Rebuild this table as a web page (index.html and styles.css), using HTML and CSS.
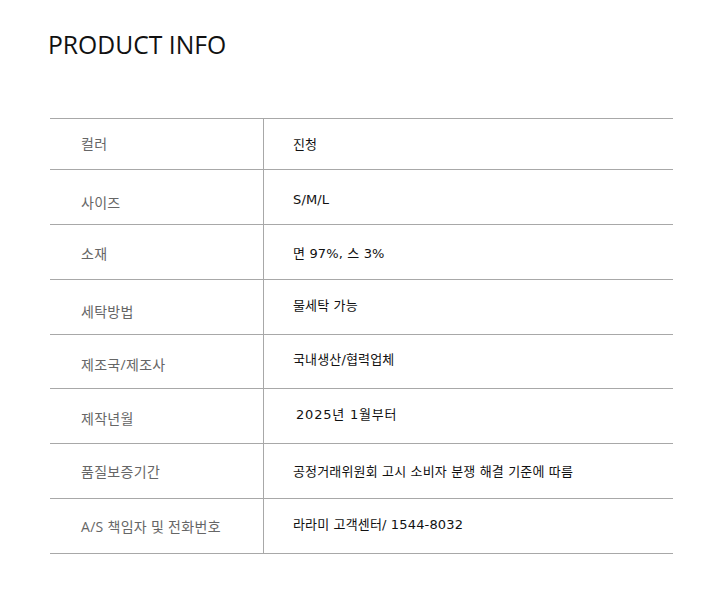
FILE: index.html
```html
<!DOCTYPE html>
<html lang="ko">
<head>
<meta charset="utf-8">
<link rel="stylesheet" href="styles.css">
</head>
<body>
<div class="page">
  <h1 class="title">PRODUCT INFO</h1>
  <div class="info">
    <div class="row r1"><div class="label">컬러</div><div class="value">진청</div></div>
    <div class="row r2"><div class="label">사이즈</div><div class="value">S/M/L</div></div>
    <div class="row r3"><div class="label">소재</div><div class="value">면 97%, 스 3%</div></div>
    <div class="row r4"><div class="label">세탁방법</div><div class="value">물세탁 가능</div></div>
    <div class="row r5"><div class="label">제조국/제조사</div><div class="value">국내생산/협력업체</div></div>
    <div class="row r6"><div class="label">제작년월</div><div class="value indent wide">2025년 1월부터</div></div>
    <div class="row r7"><div class="label">품질보증기간</div><div class="value">공정거래위원회 고시 소비자 분쟁 해결 기준에 따름</div></div>
    <div class="row r8"><div class="label">A/S 책임자 및 전화번호</div><div class="value">라라미 고객센터/ 1544-8032</div></div>
  </div>
</div>
</body>
</html>
```
FILE: styles.css
```css
html, body { margin: 0; padding: 0; background: #fff; }
body { font-family: "Open Sans", "Noto Sans CJK KR", sans-serif; }
.page { padding: 28px 0 0 48px; }
.title {
  margin: 0;
  font-weight: 400;
  font-size: 24.7px;
  line-height: 34px;
  color: #111;
}
.info {
  margin-top: 56px;
  margin-left: 2px;
  width: 623px;
  border-bottom: 1px solid #a8a8a8;
}
.row {
  display: grid;
  grid-template-columns: 214px 1fr;
  border-top: 1px solid #a8a8a8;
  height: 54px;
}
.row.r1 { height: 50px; }
.row.r5 { height: 53px; }
.label, .value {
  line-height: 20px;
  box-sizing: border-box;
}
.label {
  padding-left: 31px;
  font-size: 14px;
  letter-spacing: 0.3px;
  color: #666;
  border-right: 1px solid #a8a8a8;
}
.value {
  padding-left: 29px;
  font-family: "DejaVu Sans", "Noto Sans CJK KR", sans-serif;
  font-size: 13px;
  letter-spacing: 0.15px;
  color: #111;
}
.value.indent { padding-left: 32px; }
.value.wide { letter-spacing: 0.8px; }

.r1 .label { padding-top: 15px; }
.r2 .label { padding-top: 23px; }
.r3 .label { padding-top: 19px; }
.r4 .label { padding-top: 22px; }
.r5 .label { padding-top: 20px; }
.r6 .label { padding-top: 20px; }
.r7 .label { padding-top: 18px; }
.r8 .label { padding-top: 18px; }

.r1 .value { padding-top: 16px; }
.r2 .value { padding-top: 20px; }
.r3 .value { padding-top: 19px; }
.r4 .value { padding-top: 16px; }
.r5 .value { padding-top: 15px; }
.r6 .value { padding-top: 16px; }
.r7 .value { padding-top: 18px; }
.r8 .value { padding-top: 16px; }
```
